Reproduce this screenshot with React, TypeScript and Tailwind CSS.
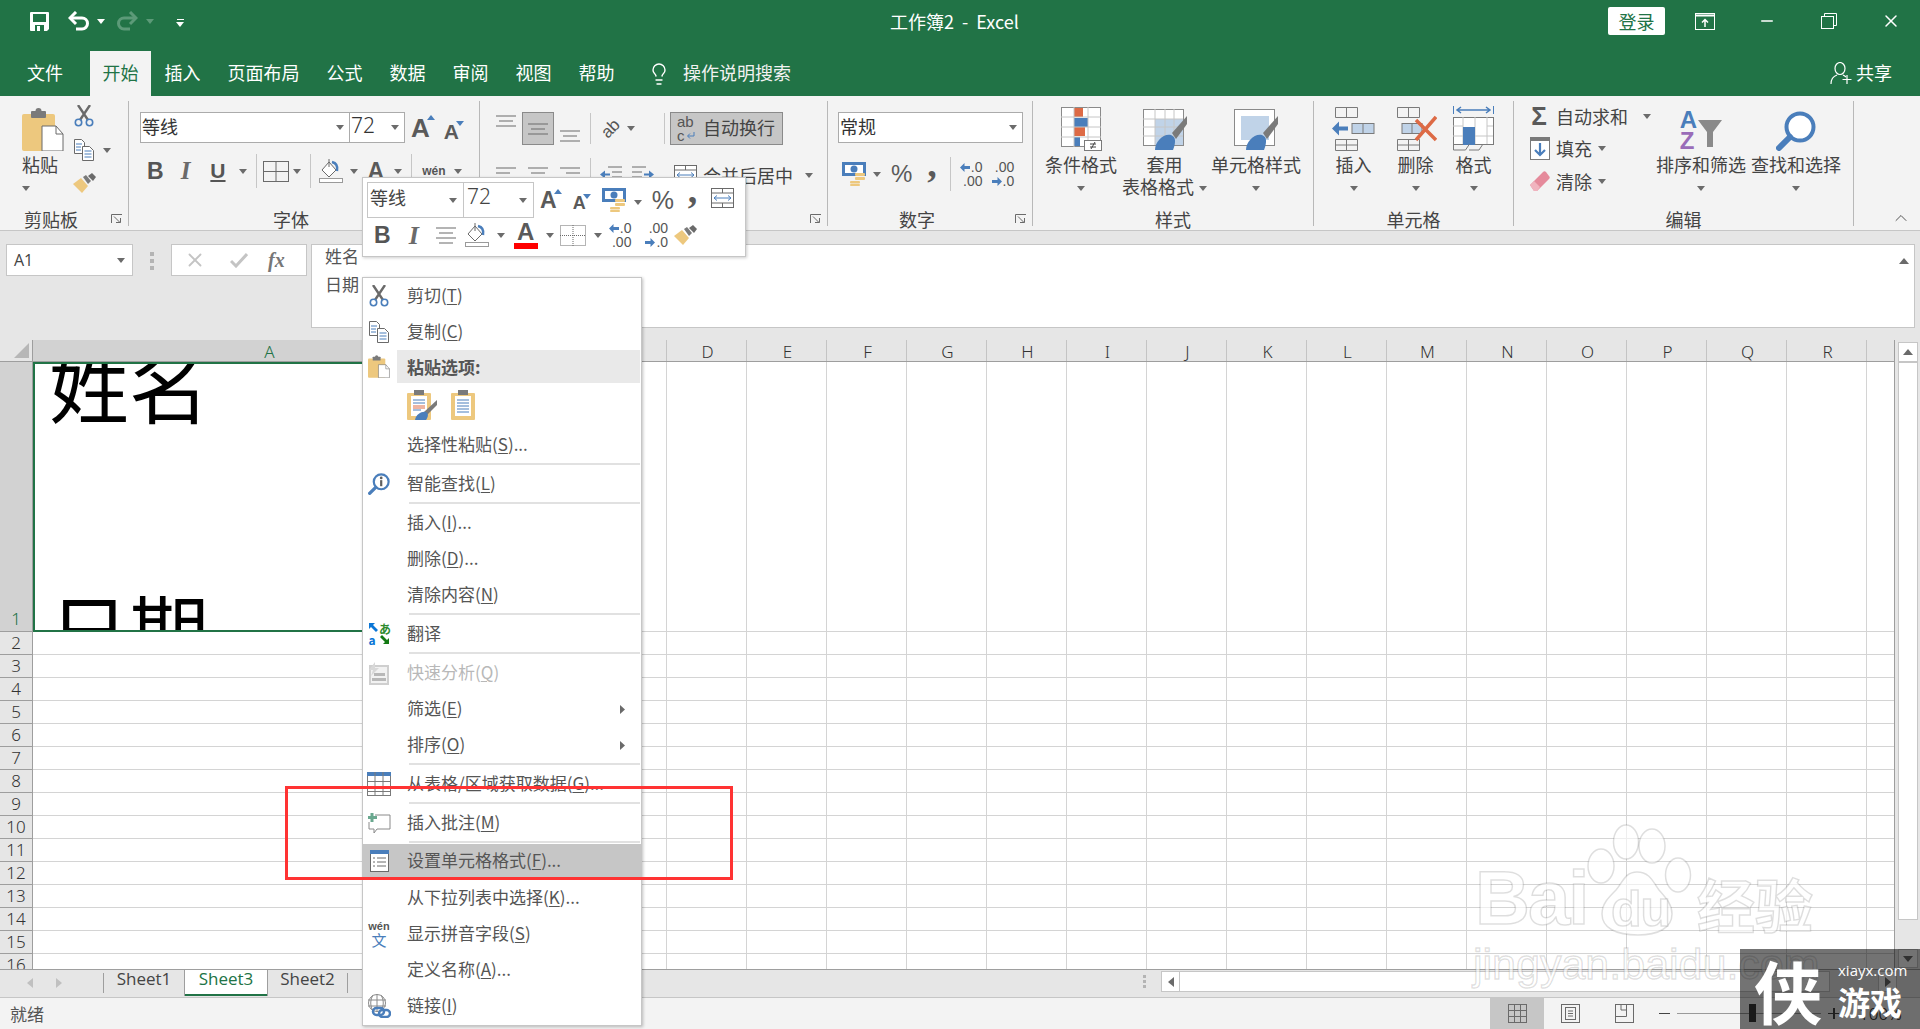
import type { ReactNode } from "react";
import { Lightbulb, Minus, X, ChevronUp } from "lucide-react";

const G = "#666666";
const B = "#4a7ebb";
const O = "#edc87e";

function Caret({ className = "", color = "#6b6b6b" }: { className?: string; color?: string }) {
  return (
    <svg width="8" height="5" viewBox="0 0 8 5" className={`shrink-0 ${className}`}>
      <path d="M0 0h8L4 5z" fill={color} />
    </svg>
  );
}

function SaveIcon() {
  return (
    <svg width="19" height="19" viewBox="0 0 19 19">
      <path d="M0 1a1 1 0 011-1h17a1 1 0 011 1v16l-2 2H1a1 1 0 01-1-1z" fill="#fff" />
      <rect x="3" y="2" width="13" height="8" fill="#217346" />
      <rect x="5" y="13" width="9" height="6" fill="#217346" />
      <rect x="7" y="14" width="3" height="5" fill="#fff" />
    </svg>
  );
}

function UndoIcon({ color = "#fff" }: { color?: string }) {
  return (
    <svg width="21" height="21" viewBox="0 0 21 21" fill="none">
      <path d="M2 7h12a5.5 5.5 0 010 11H8" stroke={color} strokeWidth="3" />
      <path d="M8 1L2 7l6 6" stroke={color} strokeWidth="3" />
    </svg>
  );
}

function PasteIcon({ w = 42, h = 43 }: { w?: number; h?: number }) {
  return (
    <svg width={w} height={h} viewBox="0 0 42 43">
      <rect x="0" y="6" width="33" height="37" rx="2" fill={O} />
      <rect x="9" y="3" width="15" height="7" rx="1" fill="#7a7a7a" />
      <circle cx="16.5" cy="3" r="3" fill="#7a7a7a" />
      <path d="M20 18h14l7 8v17H20z" fill="#fff" stroke="#6a6a6a" />
      <path d="M34 18v8h7" fill="none" stroke="#6a6a6a" />
    </svg>
  );
}

function ScissorsIcon() {
  return (
    <svg width="20" height="22" viewBox="0 0 20 22" fill="none">
      <path d="M4 0l10 15M16 0L6 15" stroke="#6a6a6a" strokeWidth="2.4" />
      <circle cx="4.5" cy="17.5" r="3.2" stroke={B} strokeWidth="1.6" />
      <circle cx="15.5" cy="17.5" r="3.2" stroke={B} strokeWidth="1.6" />
    </svg>
  );
}

function CopyIcon() {
  return (
    <svg width="20" height="22" viewBox="0 0 20 22" fill="none">
      <path d="M.5.5h7l3 3v11h-10z" fill="#fff" stroke="#6a6a6a" />
      <path d="M8.5 7.5h7l4 4v10h-11z" fill="#fff" stroke="#6a6a6a" />
      <path d="M2 5h6M2 8h5M2 11h5M10.500 12h7M10.500 15h7M10.500 18h7" stroke={B} />
    </svg>
  );
}

function BrushIcon() {
  return (
    <svg width="24" height="20" viewBox="0 0 24 20">
      <path d="M1 11l8-6 7 8-6 7z" fill={O} />
      <path d="M11 4l3-2 5 6-3 3z" fill="#7a7a7a" />
      <path d="M16 3l4-3 4 4-3 4z" fill="#6a6a6a" />
    </svg>
  );
}

function Launcher() {
  return (
    <svg width="12" height="10" viewBox="0 0 12 10" fill="none" stroke="#6a6a6a">
      <path d="M.5 9V.500H11M3 2.500l6 6M5 8.500h4.500V4" />
    </svg>
  );
}

function BorderIcon({ dotted = false }: { dotted?: boolean }) {
  return (
    <svg width="26" height="21" viewBox="0 0 26 21" fill="none" stroke="#6a6a6a" strokeDasharray={dotted ? "1 1" : undefined}>
      <rect x=".5" y=".5" width="25" height="20" />
      <path d="M13 0v21M0 10.500h26" />
    </svg>
  );
}

function FillIcon() {
  return (
    <svg width="24" height="24" viewBox="0 0 24 24" fill="none">
      <path d="M10 3L3 11l7 7 7-7z" fill="#fff" stroke="#6a6a6a" />
      <path d="M10 0v8" stroke="#6a6a6a" />
      <path d="M13 3c4 1 6 4 5 9" stroke={B} strokeWidth="2.500" />
      <rect x=".5" y="19.500" width="23" height="4" fill="#fff" stroke="#9a9a9a" />
    </svg>
  );
}

function Lines({ pattern }: { pattern: "three" | "left" | "center" | "right" }) {
  const rows: Record<string, string> = {
    three: "M0 1h20M3 6h14M0 11h20",
    left: "M0 1h20M0 6h14M0 11h20M0 16h14",
    center: "M0 1h20M3 6h14M0 11h20M3 16h14",
    right: "M0 1h20M6 6h14M0 11h20M6 16h14",
  };
  const h = pattern === "three" ? 12 : 17;
  return (
    <svg width="20" height={h} viewBox={`0 0 20 ${h}`} stroke="#6a6a6a" strokeWidth="1.200">
      <path d={rows[pattern]} />
    </svg>
  );
}

function IndentIcon({ flip = false }: { flip?: boolean }) {
  return (
    <svg width="22" height="18" viewBox="0 0 22 18" className={flip ? "-scale-x-100" : ""}>
      <path d="M8 1h14M12 6h10M12 11h10M8 16h14" stroke="#6a6a6a" fill="none" />
      <path d="M0 8.500l5-4v3h5v2H5v3z" fill={B} />
    </svg>
  );
}

function MergeIcon() {
  return (
    <svg width="23" height="20" viewBox="0 0 23 20" fill="none">
      <rect x=".5" y=".5" width="22" height="19" fill="#fff" stroke="#6a6a6a" />
      <path d="M0 5h23M0 15h23M11.500 0v5M11.500 15v5" stroke="#6a6a6a" />
      <path d="M3 10h17M6 7.500L3 10l3 2.500M17 7.500l3 2.500-3 2.500" stroke={B} />
    </svg>
  );
}

function CurrencyIcon() {
  return (
    <svg width="24" height="24" viewBox="0 0 24 24">
      <rect x="0" y="0" width="24" height="14" fill={B} />
      <rect x="3" y="3" width="18" height="8" fill="#fff" />
      <circle cx="12" cy="7" r="3.500" fill={B} />
      <rect x="13" y="11" width="10" height="3" rx="1" fill={O} />
      <rect x="13" y="15" width="10" height="3" rx="1" fill={O} />
      <rect x="8" y="19" width="10" height="2.500" rx="1" fill={O} />
      <rect x="8" y="22" width="10" height="2" rx="1" fill={O} />
    </svg>
  );
}

function Dec({ inc = false }: { inc?: boolean }) {
  const arrow = (
    <svg width="10" height="9" viewBox="0 0 10 9" className={inc ? "" : "rotate-180"}>
      <path d="M0 4.500L4.500 0v3H10v3H4.500v3z" fill={B} />
    </svg>
  );
  return (
    <div className="font-['Liberation_Sans',sans-serif] text-[14px] leading-[14px] text-[#555555]">
      <div className="flex h-[14px] items-center justify-end gap-[1px]">{inc ? arrow : null}{inc ? ".0" : ".00"}</div>
      <div className="flex h-[14px] items-center justify-end gap-[1px]">{inc ? null : arrow}{inc ? ".00" : ".0"}</div>
    </div>
  );
}

function CondIcon() {
  return (
    <svg width="41" height="44" viewBox="0 0 41 44">
      <rect x=".5" y=".5" width="39" height="39" fill="#fff" stroke="#8a8a8a" />
      <rect x="13" y="1" width="9" height="9" fill="#dd6a45" />
      <rect x="13" y="11" width="14" height="9" fill={B} />
      <rect x="13" y="20" width="11" height="9" fill="#dd6a45" />
      <rect x="13" y="30" width="6" height="9" fill={B} />
      <path d="M0 10h40M0 20h40M0 30h40M13 0v40M27 0v40" stroke="#c6c6c6" fill="none" />
      <rect x="23.500" y="33.500" width="17" height="10" fill="#fff" stroke="#7a7a7a" />
      <path d="M29 37h6M29 40h6M30 42l4-7" stroke="#444" fill="none" />
    </svg>
  );
}

function TableStyleIcon({ solid = false }: { solid?: boolean }) {
  return (
    <svg width="44" height="42" viewBox="0 0 44 42">
      <rect x=".5" y=".5" width="40" height="36" fill="#fff" stroke="#8a8a8a" />
      {solid ? (
        <rect x="7" y="7" width="28" height="24" fill="#c0d3e8" />
      ) : (
        <>
          <rect x="12" y="10" width="28" height="26" fill="#c0d3e8" />
          <path d="M0 10h40M0 18h40M0 27h40M12 0v36M22 0v36M31 0v36" stroke="#c6c6c6" fill="none" />
        </>
      )}
      <path d="M29 24L44 7v8L33 30z" fill="#7a7a7a" />
      <path d="M12 41c0-9 9-17 16-15 5 2 5 7 2 15z" fill={B} />
    </svg>
  );
}

function CellsIcon({ mode }: { mode: "insert" | "delete" }) {
  return (
    <svg width="43" height="44" viewBox="0 0 43 44" fill="none" stroke="#7a7a7a">
      <path d="M3.500.5h22v10h-22zM14.500.5v10M3.500 32.500h22v11h-22zM3.500 38h22M14.500 32.500v11" />
      {mode === "insert" ? (
        <>
          <rect x="20" y="16.500" width="22" height="10" fill="#c0d3e8" />
          <path d="M31 16v11" />
          <path d="M0 21.500l7-7v5h9v4H7v5z" fill={B} stroke="none" />
        </>
      ) : (
        <>
          <rect x="8" y="16.500" width="20" height="10" fill="#c0d3e8" />
          <path d="M18 16v11" />
          <path d="M22 13l20 20M42 10L22 33" stroke="#dd6a45" strokeWidth="3.500" />
        </>
      )}
    </svg>
  );
}

function FormatIcon() {
  return (
    <svg width="41" height="45" viewBox="0 0 41 45" fill="none">
      <path d="M.5 0v8M40.500 0v8" stroke={B} />
      <path d="M4 4h33M8 1L4 4l4 3M33 1l4 3-4 3" stroke={B} strokeWidth="1.500" />
      <rect x=".5" y="11.500" width="40" height="27" fill="#fff" stroke="#7a7a7a" />
      <path d="M0 30h40M10 11v27M22 11v27M34 11v27M0 20h10M34 20h6" stroke="#c6c6c6" />
      <rect x="10" y="21" width="12" height="18" fill={B} />
      <path d="M.5 38v6h12l4-6M16 44h10l4-6" stroke="#7a7a7a" />
    </svg>
  );
}

function FillDownIcon() {
  return (
    <svg width="20" height="23" viewBox="0 0 20 23" fill="none">
      <rect x=".5" y=".5" width="19" height="22" fill="#fff" stroke="#7a7a7a" />
      <rect x="0" y="0" width="20" height="4" fill="#7a7a7a" />
      <path d="M10 6v12M5 13l5 5 5-5" stroke={B} strokeWidth="2.200" />
    </svg>
  );
}

function EraserIcon() {
  return (
    <svg width="20" height="20" viewBox="0 0 20 20">
      <path d="M0 14L13 1c1-1 2-1 3 0l3 4c1 1 1 2 0 3L7 20H4z" fill="#e58a9b" />
      <path d="M0 14l4-4 6 6-3 4H4z" fill="#f0b3be" />
    </svg>
  );
}

function SearchIcon({ size = 40, info = false }: { size?: number; info?: boolean }) {
  return (
    <svg width={size} height={size} viewBox="0 0 40 40" fill="none">
      <circle cx="24" cy="16" r="13.500" fill="#fff" stroke={B} strokeWidth="4" />
      <path d="M14 26L3 37" stroke={B} strokeWidth="6" strokeLinecap="round" />
      {info ? (
        <>
          <circle cx="24" cy="9" r="2.500" fill="#5f5f5f" />
          <rect x="22" y="13" width="4" height="11" fill="#5f5f5f" />
        </>
      ) : null}
    </svg>
  );
}

function BigButton({
  icon,
  label,
  second,
  w,
  ml,
  align = "items-center",
}: {
  icon: ReactNode;
  label: string;
  second?: string;
  w: string;
  ml: string;
  align?: string;
}) {
  return (
    <div className={`flex shrink-0 flex-col ${align} ${w} ${ml}`}>
      <div className="flex h-[51px] items-end justify-center pb-[1px]">{icon}</div>
      <div className="h-[24px] whitespace-nowrap leading-[24px]">{label}</div>
      <div className="flex h-[22px] items-center justify-center gap-[5px] whitespace-nowrap">
        {second ? <span className="-translate-y-[1px] leading-[22px]">{second}</span> : null}
        <Caret className="mt-[2px]" />
      </div>
    </div>
  );
}

function Group({
  w,
  label,
  labelClass = "text-center",
  launcher = false,
  sep = true,
  children,
}: {
  w: string;
  label: string;
  labelClass?: string;
  launcher?: boolean;
  sep?: boolean;
  children: ReactNode;
}) {
  return (
    <div className={`relative flex h-[125px] shrink-0 flex-col ${sep ? "border-r border-[#b8b8b8]" : ""} ${w}`}>
      <div className="min-h-0 flex-1">{children}</div>
      <div className={`h-[14px] whitespace-nowrap leading-[14px] text-[#444444] ${labelClass}`}>{label}</div>
      {launcher ? (
        <div className="absolute right-[5px] bottom-[2px]">
          <Launcher />
        </div>
      ) : null}
    </div>
  );
}

function Select({ text, w, size = "text-[18px]" }: { text: string; w: string; size?: string }) {
  return (
    <div className={`flex h-[31px] items-center justify-between border border-[#ababab] bg-white pl-[1px] pr-[5px] ${w} ${size}`}>
      <span className="-translate-y-[2px] leading-none text-[#333333]">{text}</span>
      <Caret />
    </div>
  );
}

function FontA({ up, size }: { up: boolean; size: string }) {
  return (
    <div className="flex items-start font-['Liberation_Sans',sans-serif] font-bold leading-none text-[#5a5a5a]">
      <span className={size}>A</span>
      <svg width="8" height="5" viewBox="0 0 8 5" className="-ml-[3px]">
        <path d={up ? "M0 5h8L4 0z" : "M0 0h8L4 5z"} fill={B} />
      </svg>
    </div>
  );
}

function Ribbon() {
  return (
    <div className="flex h-[135px] shrink-0 border-b border-[#c6c6c6] bg-[#f3f3f3] pt-[5px] text-[18px] text-[#444444]">
      <Group w="w-[129px]" label="剪贴板" labelClass="pl-[24px]" launcher>
        <div className="flex">
          <BigButton icon={<PasteIcon />} label="粘贴" w="w-[36px]" ml="ml-[22px]" align="items-start" />
          <div className="ml-[16px] flex flex-col">
            <div className="mt-[4px]"><ScissorsIcon /></div>
            <div className="mt-[12px] flex items-center gap-[9px]"><CopyIcon /><Caret /></div>
            <div className="mt-[12px] -ml-[2px]"><BrushIcon /></div>
          </div>
        </div>
      </Group>

      <Group w="w-[351px]" label="字体" labelClass="pl-[144px]">
        <div className="mt-[11px] flex items-start">
          <Select text="等线" w="ml-[11px] w-[210px]" />
          <Select text="72" w="w-[56px] -ml-px" size="text-[21px] font-['Noto_Sans',sans-serif] font-light" />
          <div className="ml-[6px] mt-[3px]"><FontA up size="text-[26px]" /></div>
          <div className="ml-[9px] mt-[9px]"><FontA up={false} size="text-[21px]" /></div>
        </div>
        <div className="mt-[12px] flex h-[34px] items-center -translate-y-[1px]">
          <span className="ml-[18px] font-['Liberation_Sans',sans-serif] text-[23px] font-bold text-[#555555]">B</span>
          <span className="ml-[17px] font-['Liberation_Serif',serif] text-[25px] font-bold italic text-[#6a6a6a]">I</span>
          <span className="ml-[20px] font-['Liberation_Sans',sans-serif] text-[21px] font-bold text-[#555555] underline">U</span>
          <Caret className="ml-[13px]" />
          <div className="ml-[9px] h-[34px] w-px bg-[#c6c6c6]" />
          <div className="ml-[6px]"><BorderIcon /></div>
          <Caret className="ml-[4px]" />
          <div className="ml-[9px] h-[34px] w-px bg-[#c6c6c6]" />
          <div className="ml-[8px]"><FillIcon /></div>
          <Caret className="ml-[7px]" />
          <span className="ml-[10px] font-['Liberation_Sans',sans-serif] text-[23px] font-bold text-[#5a5a5a]">A</span>
          <Caret className="ml-[10px]" />
          <div className="ml-[9px] h-[34px] w-px bg-[#c6c6c6]" />
          <div className="ml-[10px] text-center font-['Liberation_Sans',sans-serif] text-[12px] font-bold leading-[12px] text-[#555555]">wén</div>
          <Caret className="ml-[8px]" />
        </div>
      </Group>

      <Group w="w-[185px]" label="对齐方式" sep={false}>
        <div className="absolute right-0 top-[12px] h-[31px] w-px bg-[#c6c6c6]" />
        <div className="mt-[11px] flex h-[33px] items-center">
          <div className="ml-[16px] -mt-[16px]"><Lines pattern="three" /></div>
          <div className="ml-[6px] flex h-[33px] w-[32px] items-center justify-center border border-[#8a8a8a] bg-[#c6c6c6]"><Lines pattern="three" /></div>
          <div className="ml-[6px] mt-[14px]"><Lines pattern="three" /></div>
          <div className="ml-[10px] h-[31px] w-px bg-[#c6c6c6]" />
          <div className="ml-[10px] -rotate-45 font-['Liberation_Sans',sans-serif] text-[17px] leading-none text-[#555555]">ab</div>
          <Caret className="ml-[7px]" />
        </div>
        <div className="mt-[13px] flex h-[34px] items-center">
          <div className="ml-[16px]"><Lines pattern="left" /></div>
          <div className="ml-[12px]"><Lines pattern="center" /></div>
          <div className="ml-[12px]"><Lines pattern="right" /></div>
          <div className="ml-[10px] h-[34px] w-px bg-[#c6c6c6]" />
          <div className="ml-[9px]"><IndentIcon /></div>
          <div className="ml-[10px]"><IndentIcon flip /></div>
        </div>
      </Group>

      <Group w="w-[163px]" label="" launcher>
        <div className="mt-[11px] ml-[5px] flex h-[33px] w-[113px] items-center border border-[#8a8a8a] bg-[#c6c6c6]">
          <div className="ml-[6px] w-[20px] font-['Liberation_Sans',sans-serif] text-[15px] leading-[14px] text-[#555555]">
            ab<br />
            <span className="inline-flex items-center gap-[1px]">c
              <svg width="9" height="8" viewBox="0 0 9 8" fill="none"><path d="M8 0v4H2M4 1.500L1.500 4 4 6.500" stroke={B} /></svg>
            </span>
          </div>
          <span className="ml-[6px] -translate-y-[1px] whitespace-nowrap">自动换行</span>
        </div>
        <div className="mt-[13px] flex h-[34px] items-center">
          <div className="ml-[9px]"><MergeIcon /></div>
          <span className="ml-[6px] whitespace-nowrap">合并后居中</span>
          <Caret className="ml-[12px]" />
        </div>
      </Group>

      <Group w="w-[205px]" label="数字" labelClass="pl-[71px] text-left" launcher>
        <div className="mt-[11px]">
          <Select text="常规" w="ml-[10px] w-[185px]" />
        </div>
        <div className="mt-[14px] flex h-[34px] items-center">
          <div className="ml-[14px]"><CurrencyIcon /></div>
          <Caret className="ml-[7px]" />
          <span className="ml-[10px] font-['Liberation_Sans',sans-serif] text-[24px] text-[#5a5a5a]">%</span>
          <span className="ml-[15px] -translate-y-[10px] font-['Liberation_Serif',serif] text-[38px] font-bold leading-[20px] text-[#5a5a5a]">,</span>
          <div className="ml-[13px] h-[34px] w-px bg-[#c6c6c6]" />
          <div className="ml-[9px]"><Dec inc /></div>
          <div className="ml-[9px]"><Dec /></div>
        </div>
      </Group>

      <Group w="w-[281px]" label="样式">
        <div className="flex">
          <BigButton icon={<CondIcon />} label="条件格式" w="w-[72px]" ml="ml-[12px]" />
          <BigButton icon={<TableStyleIcon />} label="套用" second="表格格式" w="w-[85px]" ml="ml-[5px]" />
          <BigButton icon={<TableStyleIcon solid />} label="单元格样式" w="w-[90px]" ml="ml-[4px]" />
        </div>
      </Group>

      <Group w="w-[200px]" label="单元格">
        <div className="flex">
          <BigButton icon={<CellsIcon mode="insert" />} label="插入" w="w-[43px]" ml="ml-[18px]" />
          <BigButton icon={<CellsIcon mode="delete" />} label="删除" w="w-[43px]" ml="ml-[19px]" />
          <BigButton icon={<FormatIcon />} label="格式" w="w-[41px]" ml="ml-[16px]" />
        </div>
      </Group>

      <Group w="w-[340px]" label="编辑">
        <div className="flex">
          <div className="ml-[16px] flex w-[135px] shrink-0 flex-col">
            <div className="mt-[2px] flex h-[26px] items-center">
              <span className="w-[18px] text-center font-['Liberation_Sans',sans-serif] text-[26px] font-bold leading-none text-[#5a5a5a]">Σ</span>
              <span className="ml-[8px] whitespace-nowrap">自动求和</span>
              <Caret className="ml-[15px]" />
            </div>
            <div className="mt-[6px] flex h-[26px] items-center">
              <FillDownIcon />
              <span className="ml-[6px] whitespace-nowrap">填充</span>
              <Caret className="ml-[6px]" />
            </div>
            <div className="mt-[7px] flex h-[26px] items-center">
              <EraserIcon />
              <span className="ml-[6px] whitespace-nowrap">清除</span>
              <Caret className="ml-[6px]" />
            </div>
          </div>
          <BigButton
            icon={
              <div className="flex items-start">
                <div className="font-['Liberation_Sans',sans-serif] text-[24px] font-bold leading-[21px]">
                  <div className="text-[#4a7ebb]">A</div>
                  <div className="text-[#9a6cb8]">Z</div>
                </div>
                <svg width="24" height="27" viewBox="0 0 24 27" className="mt-[11px] ml-[1px]">
                  <path d="M0 0h24l-9 12v15h-6V12z" fill="#8a8a8a" />
                </svg>
              </div>
            }
            label="排序和筛选"
            w="w-[90px]"
            ml="ml-[-9px]"
          />
          <BigButton icon={<SearchIcon />} label="查找和选择" w="w-[90px]" ml="ml-[5px]" />
        </div>
      </Group>

      <div className="relative flex-1">
        <ChevronUp className="absolute bottom-[2px] right-[9px] text-[#555555]" size={20} strokeWidth={1.2} />
      </div>
    </div>
  );
}

function TitleBar() {
  return (
    <div className="flex h-[51px] shrink-0 items-center bg-[#217346] pb-[9px] text-white">
      <div className="ml-[30px]"><SaveIcon /></div>
      <div className="ml-[19px]"><UndoIcon /></div>
      <Caret className="ml-[8px]" color="#ffffff" />
      <div className="ml-[12px] -scale-x-100"><UndoIcon color="#5c9a78" /></div>
      <Caret className="ml-[8px]" color="#5c9a78" />
      <div className="ml-[22px] mt-[4px] flex flex-col items-center gap-[2px]">
        <div className="h-[1.500px] w-[7px] bg-white" />
        <Caret color="#ffffff" />
      </div>
      <div className="ml-[706px] w-[135px] whitespace-nowrap text-[18px] leading-none">工作簿2&nbsp;&nbsp;-&nbsp;&nbsp;Excel</div>
      <div className="ml-[583px] flex h-[28px] w-[57px] items-center justify-center rounded-[2px] bg-white text-[18px] text-[#217346]">登录</div>
      <svg width="20" height="17" viewBox="0 0 20 17" fill="none" stroke="#fff" className="ml-[30px]">
        <rect x=".5" y=".5" width="19" height="16" />
        <path d="M0 2.500h20" strokeWidth="2" />
        <path d="M10 14V7M7 9.500L10 6.500l3 3" strokeWidth="1.500" />
      </svg>
      <Minus className="ml-[43px]" size={18} strokeWidth={2} />
      <svg width="16" height="16" viewBox="0 0 16 16" fill="none" stroke="#fff" className="ml-[45px]">
        <rect x=".5" y="3.500" width="12" height="12" />
        <path d="M3.500 3V.5h12v12H13" />
      </svg>
      <X className="ml-[44px]" size={20} strokeWidth={1.8} />
    </div>
  );
}

function TabRow() {
  const tabs = ["插入", "页面布局", "公式", "数据", "审阅", "视图", "帮助"];
  return (
    <div className="flex h-[45px] shrink-0 items-end bg-[#217346] text-[18px] text-white">
      <div className="flex h-[45px] w-[90px] items-center justify-center pb-[2px]">文件</div>
      <div className="flex h-[45px] w-[61px] items-center justify-center bg-[#f3f3f3] pb-[2px] text-[#217346]">开始</div>
      {tabs.map((t) => (
        <div key={t} className="flex h-[45px] items-center whitespace-nowrap px-[13.5px] pb-[2px]">{t}</div>
      ))}
      <Lightbulb className="ml-[19px] mb-[10px]" size={24} strokeWidth={1.4} />
      <div className="ml-[12px] flex h-[45px] items-center whitespace-nowrap pb-[2px] text-[#f2f2f2]">操作说明搜索</div>
      <svg width="22" height="23" viewBox="0 0 22 23" fill="none" stroke="#fff" strokeWidth="1.200" className="ml-[1039px] mb-[11px]">
        <ellipse cx="10" cy="6.500" rx="5" ry="6" />
        <path d="M1 22c0-5 3-8 6-9M13 13c1 .5 2 1 3 2" />
        <path d="M17 13v9M12.500 17.500h9" />
      </svg>
      <div className="ml-[4px] flex h-[45px] items-center whitespace-nowrap pb-[2px]">共享</div>
    </div>
  );
}

function FormulaBar() {
  return (
    <div className="flex h-[109px] shrink-0 items-start bg-[#e6e6e6] pt-[13px] text-[#444444]">
      <div className="ml-[6px] flex h-[32px] w-[127px] items-center justify-between border border-[#c6c6c6] bg-white px-[7px] font-['Open_Sans',sans-serif] text-[16px]">
        <span>A1</span>
        <Caret />
      </div>
      <div className="ml-[17px] mt-[8px] flex flex-col gap-[3px]">
        <div className="h-[4px] w-[4px] bg-[#b4b4b4]" />
        <div className="h-[4px] w-[4px] bg-[#b4b4b4]" />
        <div className="h-[4px] w-[4px] bg-[#b4b4b4]" />
      </div>
      <div className="ml-[17px] flex h-[32px] w-[136px] items-center border border-[#c6c6c6] bg-white">
        <X className="ml-[12px] text-[#c4c4c4]" size={22} strokeWidth={2} />
        <svg width="18" height="15" viewBox="0 0 18 15" fill="none" className="ml-[24px]">
          <path d="M1 8l5 5L17 1" stroke="#c4c4c4" strokeWidth="3" />
        </svg>
        <span className="ml-[20px] font-['Liberation_Serif',serif] text-[20px] font-bold italic leading-none text-[#777777]">fx</span>
      </div>
      <div className="relative ml-[4px] h-[84px] w-[1604px] border border-[#c6c6c6] bg-white pl-[13px] text-[17px] leading-[28px] text-[#555555]">
        <div className="-mt-[3px]">姓名</div>
        <div>日期</div>
        <svg width="10" height="6" viewBox="0 0 10 6" className="absolute right-[5px] top-[13px]">
          <path d="M0 6l5-6 5 6z" fill="#6a6a6a" />
        </svg>
      </div>
    </div>
  );
}

const COLS = ["B", "C", "D", "E", "F", "G", "H", "I", "J", "K", "L", "M", "N", "O", "P", "Q", "R"];

function ColumnHeader() {
  return (
    <div className="flex h-[22px] shrink-0 border-b border-[#9e9e9e] bg-[#e6e6e6] font-['Noto_Sans',sans-serif] text-[17px] font-light leading-[24px] text-[#333333]">
      <div className="flex w-[33px] items-end justify-end border-r border-[#9e9e9e] pb-[3px] pr-[3px]">
        <svg width="15" height="15" viewBox="0 0 15 15"><path d="M15 0v15H0z" fill="#b7b7b7" /></svg>
      </div>
      <div className="w-[474px] border-r border-[#b8b8b8] bg-[#d2d2d2] text-center text-[#217346]">A</div>
      {COLS.map((c) => (
        <div key={c} className="w-[80px] border-r border-[#c4c4c4] pl-[2px] text-center">{c}</div>
      ))}
      <div className="w-[27px]" />
    </div>
  );
}

function GridRow({ n, first = false }: { n: number; first?: boolean }) {
  return (
    <div className={`flex shrink-0 ${first ? "h-[270px]" : "h-[23px]"}`}>
      <div
        className={`flex w-[33px] shrink-0 justify-center border-r border-b border-[#9e9e9e] font-['Noto_Sans',sans-serif] text-[17px] font-light ${
          first ? "items-end bg-[#d2d2d2] text-[#217346]" : "items-center bg-[#e6e6e6] text-[#333333]"
        }`}
      >
        {n}
      </div>
      {first ? (
        <div className="flex w-[474px] shrink-0 flex-col overflow-hidden border-2 border-[#217346] bg-white pl-[14px] font-['Noto_Sans_CJK_SC',sans-serif] text-[80px] leading-[245px] text-black">
          <div className="-mt-[104px] h-[245px] shrink-0">姓名</div>
          <div className="h-[245px] shrink-0">日期</div>
        </div>
      ) : (
        <div className="w-[474px] shrink-0 border-r border-b border-[#d4d4d4]" />
      )}
      {COLS.map((c) => (
        <div key={c} className="w-[80px] shrink-0 border-r border-b border-[#d4d4d4]" />
      ))}
      <div className="w-[27px] shrink-0 border-b border-[#d4d4d4]" />
    </div>
  );
}

function VScroll() {
  return (
    <div className="flex w-[26px] shrink-0 flex-col border-l border-[#9e9e9e] bg-[#e6e6e6] pl-[3px] pr-[2px] pt-[2px]">
      <div className="flex h-[20px] items-center justify-center border border-[#c6c6c6] bg-white">
        <svg width="10" height="6" viewBox="0 0 10 6"><path d="M0 6l5-6 5 6z" fill="#6a6a6a" /></svg>
      </div>
      <div className="h-[558px] border border-[#c6c6c6] bg-white" />
      <div className="mt-auto mb-[1px] flex h-[19px] items-center justify-center border border-[#c6c6c6] bg-white">
        <svg width="10" height="6" viewBox="0 0 10 6"><path d="M0 0l5 6 5-6z" fill="#6a6a6a" /></svg>
      </div>
    </div>
  );
}

function SheetBar() {
  return (
    <div className="flex h-[29px] shrink-0 border-t border-b border-t-[#9e9e9e] border-b-[#c6c6c6] bg-[#e6e6e6] font-['Open_Sans',sans-serif] text-[17px] text-[#444444]">
      <div className="ml-[27px] flex h-[26px] items-center">
        <svg width="6" height="10" viewBox="0 0 6 10"><path d="M6 0v10L0 5z" fill="#c0c0c0" /></svg>
        <svg width="6" height="10" viewBox="0 0 6 10" className="ml-[23px]"><path d="M0 0v10l6-5z" fill="#c0c0c0" /></svg>
      </div>
      <div className="ml-[41px] mt-[3px] h-[20px] w-px bg-[#9e9e9e]" />
      <div className="h-[26px] w-[81px] border-r border-[#9e9e9e] text-center leading-[17px]">Sheet1</div>
      <div className="h-[26px] w-[82px] border-b-2 border-[#217346] bg-white text-center leading-[17px] text-[#217346]">Sheet3</div>
      <div className="h-[26px] w-[80px] border-l border-[#9e9e9e] text-center leading-[17px]">Sheet2</div>
      <div className="mt-[3px] h-[20px] w-px bg-[#9e9e9e]" />
      <div className="ml-[795px] mt-[5px] flex flex-col gap-[2px]">
        <div className="h-[3px] w-[3px] bg-[#b4b4b4]" />
        <div className="h-[3px] w-[3px] bg-[#b4b4b4]" />
        <div className="h-[3px] w-[3px] bg-[#b4b4b4]" />
      </div>
      <div className="ml-[15px] mt-[1px] flex h-[21px] w-[19px] items-center justify-center border border-[#c6c6c6] bg-white">
        <svg width="6" height="10" viewBox="0 0 6 10"><path d="M6 0v10L0 5z" fill="#6a6a6a" /></svg>
      </div>
      <div className="mt-[1px] h-[21px] w-[650px] border-y border-r border-[#c6c6c6] bg-white" />
      <div className="ml-[48px] mt-[1px] flex h-[21px] w-[19px] items-center justify-center border border-[#c6c6c6] bg-white">
        <svg width="6" height="10" viewBox="0 0 6 10"><path d="M0 0v10l6-5z" fill="#6a6a6a" /></svg>
      </div>
    </div>
  );
}

function StatusBar() {
  return (
    <div className="flex flex-1 items-center bg-[#f3f3f3] text-[#555555]">
      <span className="ml-[10px] text-[17px]">就绪</span>
      <div className="ml-[1446px] flex h-full w-[54px] items-center justify-center bg-[#c6c6c6]">
        <svg width="19" height="19" viewBox="0 0 19 19" fill="none" stroke="#6a6a6a">
          <rect x=".5" y=".5" width="18" height="18" />
          <path d="M6.500 0v19M12.500 0v19M0 6.500h19M0 12.500h19" />
        </svg>
      </div>
      <svg width="19" height="19" viewBox="0 0 19 19" fill="none" stroke="#6a6a6a" className="ml-[17px]">
        <rect x=".5" y=".5" width="18" height="18" />
        <rect x="4.500" y="3.500" width="10" height="12" />
        <path d="M7 7h5M7 9.500h5M7 12h5" />
      </svg>
      <svg width="19" height="19" viewBox="0 0 19 19" fill="none" stroke="#6a6a6a" className="ml-[35px]">
        <rect x=".5" y=".5" width="18" height="18" />
        <path d="M.5 12.500h11V0M6 0v6h5" />
      </svg>
      <div className="ml-[25px] h-[1.500px] w-[11px] bg-[#444444]" />
      <div className="relative ml-[7px] h-px w-[144px] bg-[#9a9a9a]">
        <div className="absolute left-[72px] -top-[9px] h-[18px] w-[7px] bg-[#3a3a3a]" />
      </div>
      <div className="relative ml-[7px] h-[1.500px] w-[11px] bg-[#444444]">
        <div className="absolute left-[5px] -top-[5px] h-[11px] w-[1.500px] bg-[#444444]" />
      </div>
      <span className="ml-[20px] font-['Noto_Sans',sans-serif] text-[17px] font-light text-[#222222]">100%</span>
    </div>
  );
}

function MenuItem({
  icon,
  text,
  hot,
  tail,
  sub = false,
  active = false,
  disabled = false,
}: {
  icon?: ReactNode;
  text: string;
  hot?: string;
  tail?: string;
  sub?: boolean;
  active?: boolean;
  disabled?: boolean;
}) {
  return (
    <div className={`flex items-center ${active ? "mb-[2px] h-[34px] bg-[#c6c6c6]" : "h-[36px]"} ${disabled ? "text-[#b8b8b8]" : ""}`}>
      <div className="flex w-[32px] shrink-0 items-center justify-center">{icon}</div>
      <div className="ml-[12px] flex-1 -translate-y-[1px] whitespace-nowrap">
        {text}
        {hot ? (
          <>
            (<span className="underline underline-offset-2">{hot}</span>)
          </>
        ) : null}
        {tail}
      </div>
      {sub ? (
        <svg width="5" height="9" viewBox="0 0 5 9" className="mr-[16px]">
          <path d="M0 0v9l5-4.500z" fill="#6a6a6a" />
        </svg>
      ) : null}
    </div>
  );
}

function Sep() {
  return (
    <div className="flex h-[3px] items-start pl-[46px] pr-[1px]">
      <div className="h-[2px] w-full bg-[#e1e1e1]" />
    </div>
  );
}

function MiniToolbar() {
  return (
    <div className="absolute left-[362px] top-[177px] h-[80px] w-[384px] border border-[#c6c6c6] bg-white pl-[4px] pt-[4px] text-[18px] text-[#444444] shadow-[1px_1px_3px_rgba(0,0,0,0.2)]">
      <div className="flex h-[36px] items-start">
        <div className="flex h-[36px] w-[97px] items-center justify-between border border-[#c6c6c6] pl-[2px] pr-[6px]">
          <span className="-translate-y-[3px] leading-none">等线</span><Caret />
        </div>
        <div className="-ml-px flex h-[36px] w-[71px] items-center justify-between border border-[#c6c6c6] pl-[3px] pr-[6px] font-['Noto_Sans',sans-serif] text-[21px] font-light">
          <span className="-translate-y-[3px]">72</span><Caret />
        </div>
        <div className="ml-[6px] mt-[7px]"><FontA up size="text-[23px]" /></div>
        <div className="ml-[11px] mt-[12px]"><FontA up={false} size="text-[18px]" /></div>
        <div className="ml-[11px] mt-[6px]"><CurrencyIcon /></div>
        <Caret className="ml-[8px] mt-[18px]" />
        <span className="ml-[10px] mt-[2px] font-['Liberation_Sans',sans-serif] text-[25px] leading-[32px] text-[#5a5a5a]">%</span>
        <span className="ml-[14px] -mt-[1px] font-['Liberation_Serif',serif] text-[38px] font-bold leading-[18px] text-[#5a5a5a]">,</span>
        <div className="ml-[14px] mt-[6px]"><MergeIcon /></div>
      </div>
      <div className="-mt-[2px] flex h-[38px] items-center">
        <span className="ml-[7px] font-['Liberation_Sans',sans-serif] text-[23px] font-bold text-[#555555]">B</span>
        <span className="ml-[18px] font-['Liberation_Serif',serif] text-[26px] font-bold italic text-[#6a6a6a]">I</span>
        <div className="ml-[17px]"><Lines pattern="center" /></div>
        <div className="ml-[9px]"><FillIcon /></div>
        <Caret className="ml-[8px]" />
        <div className="ml-[9px] flex w-[24px] flex-col items-center">
          <span className="font-['Liberation_Sans',sans-serif] text-[24px] font-bold leading-[22px] text-[#5a5a5a]">A</span>
          <div className="h-[6px] w-[24px] bg-[#ff0000]" />
        </div>
        <Caret className="ml-[8px]" />
        <div className="ml-[6px]"><BorderIcon dotted /></div>
        <Caret className="ml-[8px]" />
        <div className="ml-[7px]"><Dec inc /></div>
        <div className="ml-[14px]"><Dec /></div>
        <div className="ml-[5px]"><BrushIcon /></div>
      </div>
    </div>
  );
}

function ContextMenu() {
  return (
    <div className="absolute left-[362px] top-[277px] h-[749px] w-[280px] border border-[#c6c6c6] bg-white text-[17px] text-[#555555] shadow-[1px_1px_3px_rgba(0,0,0,0.25)]">
      <MenuItem icon={<ScissorsIcon />} text="剪切" hot="T" />
      <MenuItem icon={<CopyIcon />} text="复制" hot="C" />
      <div className="flex h-[33px] items-center">
        <div className="flex w-[32px] shrink-0 justify-center"><PasteIcon w={22} h={23} /></div>
        <div className="ml-[2px] mr-[1px] flex h-[33px] flex-1 items-center bg-[#e9e9e9] pl-[10px] font-bold">粘贴选项:</div>
      </div>
      <div className="flex h-[44px] items-center pl-[44px]">
        <svg width="30" height="30" viewBox="0 0 30 30">
          <rect x="0" y="3" width="24" height="27" rx="1" fill={O} />
          <rect x="7" y="0" width="10" height="5" fill="#7a7a7a" />
          <rect x="4" y="6" width="16" height="20" fill="#fff" />
          <path d="M6 10h12M6 13h12M6 20h8" stroke={B} />
          <path d="M6 16h12M6 18h12" stroke="#dd6a45" />
          <path d="M17 22L30 10v5L20 25z" fill="#7a7a7a" />
          <path d="M8 30c1-6 7-9 11-8 3 2 2 5 0 8z" fill={B} />
        </svg>
        <svg width="24" height="30" viewBox="0 0 24 30" className="ml-[14px]">
          <rect x="0" y="3" width="24" height="27" rx="1" fill={O} />
          <rect x="7" y="0" width="10" height="5" fill="#7a7a7a" />
          <rect x="4" y="6" width="16" height="20" fill="#fff" />
          <path d="M6 10h12M6 13h12M6 16h12M6 19h12M6 22h12" stroke={B} />
        </svg>
      </div>
      <MenuItem text="选择性粘贴" hot="S" tail="..." />
      <Sep />
      <MenuItem icon={<SearchIcon size={22} info />} text="智能查找" hot="L" />
      <Sep />
      <MenuItem text="插入" hot="I" tail="..." />
      <MenuItem text="删除" hot="D" tail="..." />
      <MenuItem text="清除内容" hot="N" />
      <Sep />
      <MenuItem
        icon={
          <div className="grid w-[21px] grid-cols-2 font-['Noto_Sans_CJK_JP',sans-serif] text-[12px] font-bold leading-[11px]">
            <svg width="10" height="10" viewBox="0 0 10 10"><path d="M0 0h6L4 2l5 5-2 2-5-5-2 2z" fill="#0b76d6" /></svg>
            <span className="text-[#2e8b2e]">あ</span>
            <span className="text-[#0b76d6]">a</span>
            <svg width="10" height="10" viewBox="0 0 10 10"><path d="M10 10H4l2-2-5-5 2-2 5 5 2-2z" fill="#137a13" /></svg>
          </div>
        }
        text="翻译"
      />
      <Sep />
      <MenuItem
        disabled
        icon={
          <svg width="20" height="23" viewBox="0 0 20 23">
            <rect x="0" y="3" width="20" height="20" fill="#cfcfcf" />
            <rect x="2" y="5" width="16" height="16" fill="#f2f2f2" />
            <path d="M5 11h11v3H5zM3 16h14v3H3z" fill="#b8b8b8" />
            <path d="M6 0L0 8h4l-2 6 8-8H6z" fill="#d8d8d8" />
          </svg>
        }
        text="快速分析"
        hot="Q"
      />
      <MenuItem text="筛选" hot="E" sub />
      <MenuItem text="排序" hot="O" sub />
      <Sep />
      <MenuItem
        icon={
          <svg width="24" height="24" viewBox="0 0 24 24" fill="none" stroke="#7a7a7a">
            <rect x=".5" y=".5" width="23" height="23" fill="#fff" />
            <rect x="0" y="0" width="24" height="4" fill={B} stroke="none" />
            <path d="M0 9.500h24M0 14.500h24M0 19.500h24M8 0v24M16 0v24" />
          </svg>
        }
        text="从表格/区域获取数据"
        hot="G"
        tail="..."
      />
      <Sep />
      <MenuItem
        icon={
          <svg width="23" height="21" viewBox="0 0 23 21" fill="none">
            <path d="M7 2h15v14H9l-3 4v-4H1V9" stroke="#8a8a8a" />
            <path d="M4 0v9M0 4.500h9" stroke="#6aa88f" strokeWidth="3" />
          </svg>
        }
        text="插入批注"
        hot="M"
      />
      <Sep />
      <MenuItem
        active
        icon={
          <svg width="19" height="22" viewBox="0 0 19 22" fill="none" stroke="#6a6a6a">
            <rect x=".5" y=".5" width="18" height="21" fill="#fff" />
            <rect x="0" y="0" width="19" height="4" fill={B} stroke="none" />
            <path d="M3 8h2M3 12h2M3 16h2M7 8h9M7 12h9M7 16h9" />
          </svg>
        }
        text="设置单元格格式"
        hot="F"
        tail="..."
      />
      <MenuItem text="从下拉列表中选择" hot="K" tail="..." />
      <MenuItem
        icon={
          <div className="flex flex-col items-center font-['Liberation_Sans',sans-serif] text-[11px] font-bold leading-[11px] text-[#555555]">
            <span>wén</span>
            <span className="font-['Noto_Sans_CJK_SC',sans-serif] text-[15px] font-normal leading-[15px] text-[#4a7ebb]">文</span>
          </div>
        }
        text="显示拼音字段"
        hot="S"
      />
      <MenuItem text="定义名称" hot="A" tail="..." />
      <MenuItem
        icon={
          <svg width="23" height="24" viewBox="0 0 23 24" fill="none">
            <circle cx="9" cy="9" r="8.500" stroke="#8a8a8a" />
            <path d="M0 6h18M0 12h18M9 0v18M5 1c-3 5-3 11 0 16M13 1c3 5 3 11 0 16" stroke="#8a8a8a" />
            <rect x="5" y="14" width="11" height="7" rx="3.500" stroke={B} strokeWidth="2.500" />
            <rect x="11" y="16" width="11" height="7" rx="3.500" stroke={B} strokeWidth="2.500" />
          </svg>
        }
        text="链接"
        hot="I"
      />
    </div>
  );
}

function Watermarks() {
  const wm = "font-bold text-white/60 [-webkit-text-stroke:1.5px_rgba(0,0,0,0.13)]";
  return (
    <>
      <div className="pointer-events-none absolute left-[1475px] top-[822px] h-[172px] w-[350px]">
        <svg width="110" height="116" viewBox="0 0 110 116" className="absolute left-[112px] top-0" fill="rgba(255,255,255,0.6)" stroke="rgba(0,0,0,0.13)" strokeWidth="1.500">
          <ellipse cx="39" cy="20" rx="12.500" ry="17" />
          <ellipse cx="65" cy="24" rx="13" ry="17" />
          <ellipse cx="14" cy="44" rx="13" ry="17" />
          <ellipse cx="91" cy="53" rx="12.500" ry="17" />
          <path d="M50 50c13 0 16 10 22 18 7 8 13 14 13 24 0 14-14 21-34 21-22 0-36-7-36-21 0-10 6-16 14-24 7-8 9-18 21-18z" />
        </svg>
        <div className={`absolute left-0 top-[38px] font-['Liberation_Sans',sans-serif] text-[76px] leading-[76px] tracking-[-2px] ${wm}`}>Bai</div>
        <div className={`absolute left-[136px] top-[62px] font-['Liberation_Sans',sans-serif] text-[50px] leading-[50px] tracking-[-1px] ${wm}`}>du</div>
        <div className={`absolute left-[222px] top-[48px] font-['Noto_Sans_CJK_SC',sans-serif] text-[58px] leading-[66px] ${wm}`}>经验</div>
        <div className={`absolute left-[-2px] top-[116px] whitespace-nowrap font-['Liberation_Sans',sans-serif] text-[43px] font-normal leading-[52px] ${wm}`}>jingyan.baidu.com</div>
      </div>
      <div className="absolute left-[1740px] top-[949px] h-[80px] w-[180px] bg-black/55 text-white">
        <div className="absolute left-[14px] top-[5px] font-['Noto_Sans_CJK_SC',sans-serif] text-[68px] font-bold leading-[72px]">侠</div>
        <div className="absolute left-[98px] top-[12px] font-['Open_Sans',sans-serif] text-[15px] leading-[18px]">xiayx.com</div>
        <div className="absolute left-[98px] top-[34px] whitespace-nowrap font-['Noto_Sans_CJK_SC',sans-serif] text-[32px] font-bold leading-[36px]">游戏</div>
      </div>
    </>
  );
}

export default function App() {
  return (
    <div className="relative flex h-[1029px] w-[1920px] flex-col overflow-hidden bg-white font-['Noto_Sans_CJK_SC','Noto_Sans',sans-serif]">
      <TitleBar />
      <TabRow />
      <Ribbon />
      <FormulaBar />
      <div className="flex h-[629px] shrink-0">
        <div className="flex w-[1894px] shrink-0 flex-col">
          <ColumnHeader />
          <div className="flex min-h-0 flex-1 flex-col overflow-hidden">
            <GridRow n={1} first />
            {Array.from({ length: 15 }, (_, i) => (
              <GridRow key={i} n={i + 2} />
            ))}
          </div>
        </div>
        <VScroll />
      </div>
      <SheetBar />
      <StatusBar />

      <MiniToolbar />
      <ContextMenu />
      <div className="pointer-events-none absolute left-[285px] top-[786px] h-[94px] w-[448px] border-[3px] border-[#ff3333]" />
      <Watermarks />
    </div>
  );
}
